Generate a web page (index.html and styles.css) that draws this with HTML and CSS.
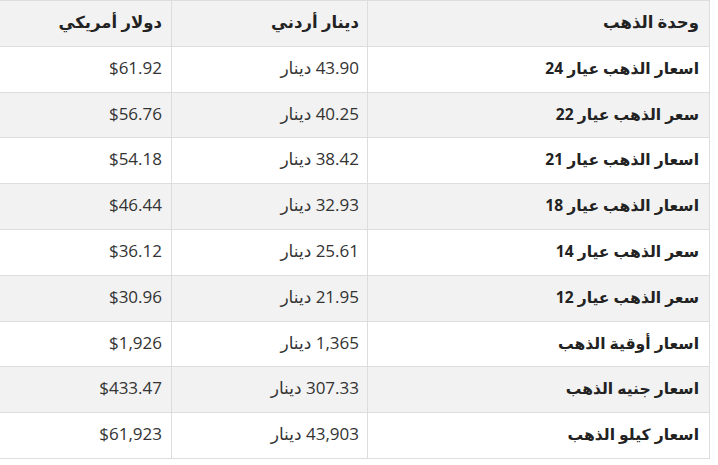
FILE: index.html
```html
<!DOCTYPE html>
<html lang="ar" dir="rtl">
<head>
<meta charset="utf-8">
<title>أسعار الذهب</title>
<link rel="stylesheet" href="styles.css">
</head>
<body>
<table class="prices">
  <colgroup>
    <col class="c-unit">
    <col class="c-jod">
    <col class="c-usd">
  </colgroup>
  <thead>
    <tr><th>وحدة الذهب</th><th>دينار أردني</th><th>دولار أمريكي</th></tr>
  </thead>
  <tbody>
    <tr><td>اسعار الذهب عيار 24</td><td>43.90 دينار</td><td>$61.92</td></tr>
    <tr><td>سعر الذهب عيار 22</td><td>40.25 دينار</td><td>$56.76</td></tr>
    <tr><td>اسعار الذهب عيار 21</td><td>38.42 دينار</td><td>$54.18</td></tr>
    <tr><td>اسعار الذهب عيار 18</td><td>32.93 دينار</td><td>$46.44</td></tr>
    <tr><td>سعر الذهب عيار 14</td><td>25.61 دينار</td><td>$36.12</td></tr>
    <tr><td>سعر الذهب عيار 12</td><td>21.95 دينار</td><td>$30.96</td></tr>
    <tr><td>اسعار أوقية الذهب</td><td>1,365 دينار</td><td>$1,926</td></tr>
    <tr><td>اسعار جنيه الذهب</td><td>307.33 دينار</td><td>$433.47</td></tr>
    <tr><td>اسعار كيلو الذهب</td><td>43,903 دينار</td><td>$61,923</td></tr>
  </tbody>
</table>
</body>
</html>
```
FILE: styles.css
```css
html, body {
  margin: 0;
  padding: 0;
  background: #ffffff;
}
body {
  font-family: "Open Sans", "DejaVu Sans", sans-serif;
  font-size: 17px;
  color: #222;
}
.prices {
  border-collapse: collapse;
  width: 710px;
  table-layout: fixed;
  margin-right: 8px;
}
.c-unit { width: 342px; }
.c-jod { width: 196px; }
.c-usd { width: 172px; }
.prices th, .prices td {
  border: 1px solid #dddddd;
  padding: 10px 10px 12px 9px;
  height: 22.8px;
  line-height: 22.8px;
  text-align: right;
  white-space: nowrap;
  unicode-bidi: plaintext;
}
.prices th:nth-child(2), .prices td:nth-child(2) { padding-right: 8px; }
.prices th:nth-child(3), .prices td:nth-child(3) { border-left: none; padding-right: 9px; }
.prices th {
  background: #f2f2f2;
  font-weight: bold;
  font-size: 16.5px;
}
.prices td { color: #333; }
.prices td:nth-child(1) { font-weight: bold; color: #222; font-size: 15.6px; }
.prices tbody tr:nth-child(even) td { background: #f2f2f2; }
```
